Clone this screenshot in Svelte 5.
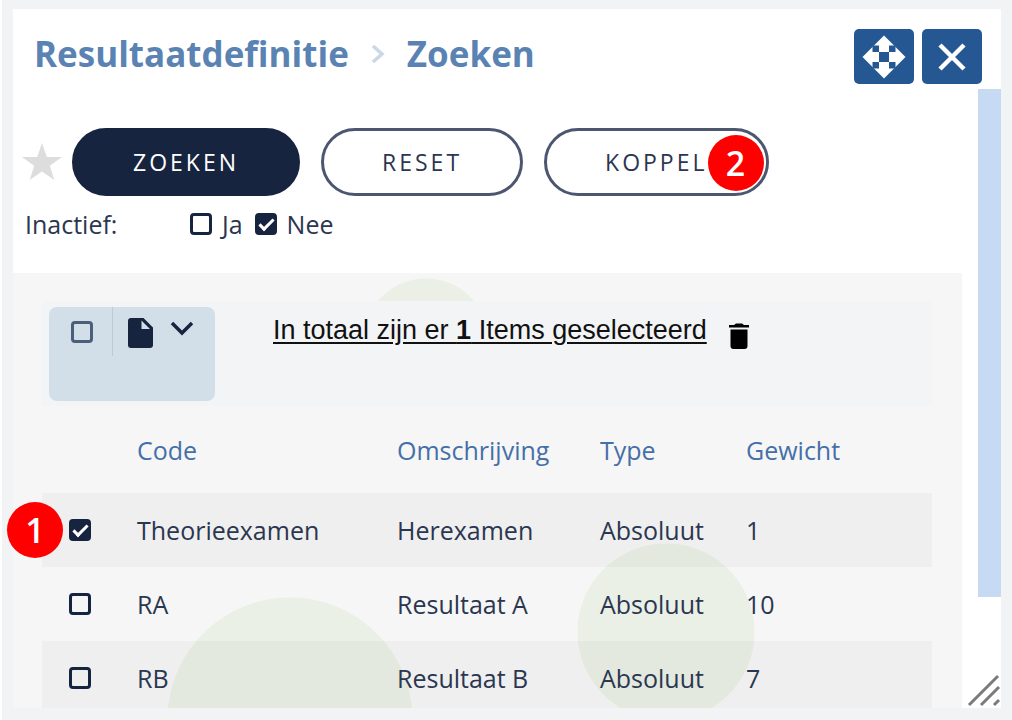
<script>
	let inactive = $state({ ja: false, nee: true });
	let selectAll = $state(false);

	let rows = $state([
		{ code: 'Theorieexamen', description: 'Herexamen', type: 'Absoluut', weight: 1, selected: true },
		{ code: 'RA', description: 'Resultaat A', type: 'Absoluut', weight: 10, selected: false },
		{ code: 'RB', description: 'Resultaat B', type: 'Absoluut', weight: 7, selected: false }
	]);

	let selectedCount = $derived(rows.filter((row) => row.selected).length);
</script>

<div class="backdrop">
	<div class="dialog" role="dialog" aria-labelledby="title">
		<header>
			<h1 id="title">
				<span>Resultaatdefinitie</span>
				<svg class="crumb" viewBox="0 0 14 20" aria-hidden="true">
					<path d="M2 2l9 8-9 8" fill="none" stroke="#c9d7e6" stroke-width="3.5" />
				</svg>
				<span>Zoeken</span>
			</h1>
			<div class="window-buttons">
				<button type="button" aria-label="Verplaatsen">
					<svg width="44" height="44" viewBox="0 0 44 44">
						<path fill="#fff" d="M22 .5L43.500 22 22 43.500.5 22z" />
						<path
							fill="#255893"
							d="M17 17h10v10H17zM10.500 10.500h6.500v6.500h-6.500zM27 10.500h6.500v6.500H27zM10.500 27h6.500v6.500h-6.500zM27 27h6.500v6.500H27z"
						/>
					</svg>
				</button>
				<button type="button" aria-label="Sluiten">
					<svg width="30" height="30" viewBox="0 0 30 30">
						<path d="M3 3l24 24M27 3L3 27" stroke="#fff" stroke-width="4.5" />
					</svg>
				</button>
			</div>
		</header>

		<div class="body">
			<main>
				<form class="search">
					<div class="actions">
						<button type="button" class="star" aria-label="Favoriet">
							<svg width="40" height="38" viewBox="0 0 40 38">
								<path
									fill="#ddd"
									d="M20 0l4.8 14H40L27.800 22.700 32.300 37 20 28.400 7.700 37l4.500-14.300L0 14h15.200z"
								/>
							</svg>
						</button>
						<button type="button" class="pill primary">ZOEKEN</button>
						<button type="button" class="pill">RESET</button>
						<div class="marked">
							<button type="button" class="pill">KOPPEL</button>
							<span class="badge badge-link">2</span>
						</div>
					</div>
					<div class="filter">
						<span class="filter-name">Inactief:</span>
						<label><input type="checkbox" bind:checked={inactive.ja} />Ja</label>
						<label><input type="checkbox" bind:checked={inactive.nee} />Nee</label>
					</div>
				</form>

				<section class="results">
					<div class="toolbar">
						<div class="tools">
							<div class="select-all">
								<input type="checkbox" aria-label="Alles selecteren" bind:checked={selectAll} />
							</div>
							<button type="button" class="export" aria-label="Exporteren">
								<svg width="25" height="30" viewBox="0 0 25 30">
									<path
										fill="#17243f"
										fill-rule="evenodd"
										d="M3 0h12.500L25 9.500V27q0 3-3 3H3q-3 0-3-3V3q0-3 3-3zM13.500 2.500V11H22z"
									/>
								</svg>
								<svg width="24" height="16" viewBox="0 0 24 16">
									<path d="M2 2l10 10L22 2" fill="none" stroke="#17243f" stroke-width="3.500" />
								</svg>
							</button>
						</div>
						<div class="selection">
							<div class="selection-line">
								<a href="#selectie">In totaal zijn er <b>{selectedCount}</b> Items geselecteerd</a>
								<button type="button" class="trash" aria-label="Selectie wissen">
									<svg width="20" height="26" viewBox="0 0 20 26">
										<path d="M0 2h5l2-1.500h6L15 2h5v2.500H0zM1.500 6.500h17V23q0 3-3 3h-11q-3 0-3-3z" />
									</svg>
								</button>
							</div>
							<p class="added">1 item toegevoegd aan de selectie</p>
						</div>
					</div>

					<table>
						<thead>
							<tr>
								<th class="col-check"></th>
								<th class="col-code">Code</th>
								<th class="col-description">Omschrijving</th>
								<th class="col-type">Type</th>
								<th>Gewicht</th>
							</tr>
						</thead>
						<tbody>
							{#each rows as row, i}
								<tr>
									<td class="check">
										<input type="checkbox" aria-label={row.code} bind:checked={row.selected} />
										{#if i === 0}
											<span class="badge badge-row">1</span>
										{/if}
									</td>
									<td>{row.code}</td>
									<td>{row.description}</td>
									<td>{row.type}</td>
									<td>{row.weight}</td>
								</tr>
							{/each}
						</tbody>
					</table>
				</section>
			</main>
			<div class="scrollbar"><div class="thumb"></div></div>
		</div>

		<svg class="grip" width="34" height="34" viewBox="0 0 34 34" aria-hidden="true">
			<path
				d="M2 31L31 2M14 31L32 13M27 31l5-5"
				fill="none"
				stroke="#7b7b7b"
				stroke-width="3"
			/>
		</svg>
	</div>
</div>

<style>
	:global(body) {
		margin: 0;
	}

	.backdrop {
		box-sizing: border-box;
		height: 100vh;
		padding: 9px 11px 12px;
		border-left: 2px solid #fff;
		background: #f2f3f5;
		color: #2b3650;
		font-family: 'Open Sans', 'Noto Sans', sans-serif;
		font-size: 25px;
		line-height: 36px;
	}

	.dialog {
		position: relative;
		display: flex;
		flex-direction: column;
		height: 100%;
		background: #fff;
	}

	button {
		padding: 0;
		border: 0;
		background: none;
		color: inherit;
		font: inherit;
		cursor: pointer;
	}

	svg {
		display: block;
	}

	header {
		display: flex;
		justify-content: space-between;
		padding: 20px 19px 5px 21px;
	}

	h1 {
		display: flex;
		align-items: center;
		gap: 22px;
		margin: 0;
		height: 50px;
		color: #5a83b3;
		font-size: 35px;
		font-weight: 700;
	}

	.crumb {
		width: 14px;
		height: 20px;
	}

	.window-buttons {
		display: flex;
		gap: 8px;
	}

	.window-buttons button {
		display: flex;
		align-items: center;
		justify-content: center;
		width: 60px;
		height: 55px;
		border-radius: 5px;
		background: #255893;
	}

	.body {
		display: flex;
		flex: 1;
		gap: 16px;
		min-height: 0;
		overflow-y: clip;
	}

	main {
		flex: 1;
		min-width: 0;
	}

	.scrollbar {
		width: 23px;
	}

	.thumb {
		height: 82%;
		background: #c7daf4;
	}

	.search {
		padding: 39px 9px 31px;
	}

	.actions {
		display: flex;
		align-items: center;
		gap: 21px;
	}

	.star {
		margin-right: -11px;
	}

	.pill {
		height: 68px;
		padding: 0 58px;
		border: 3px solid #4c566f;
		border-radius: 34px;
		background: #fff;
		color: #2b3650;
		font-size: 23px;
		letter-spacing: 3px;
	}

	.pill.primary {
		border-color: #17243f;
		background: #17243f;
		color: #fff;
	}

	.marked {
		position: relative;
	}

	.badge {
		position: absolute;
		width: 56px;
		border-radius: 50%;
		background: #f00;
		color: #fff;
		font-size: 34px;
		font-weight: 600;
		line-height: 56px;
		text-align: center;
	}

	.badge-link {
		top: 7px;
		right: 5px;
	}

	.badge-row {
		top: 9px;
		left: -35px;
	}

	.filter {
		display: flex;
		gap: 12px;
		margin-top: 10px;
		padding-left: 3px;
	}

	.filter-name {
		width: 153px;
	}

	.filter label {
		display: flex;
		align-items: center;
		gap: 10px;
	}

	input {
		display: block;
		position: relative;
		box-sizing: border-box;
		flex: none;
		width: 22px;
		height: 22px;
		margin: 0;
		border: 3px solid #17243f;
		border-radius: 4px;
		appearance: none;
	}

	input:checked {
		background: #17243f;
	}

	input:checked::after {
		content: '';
		position: absolute;
		top: 3px;
		left: 1px;
		width: 12px;
		height: 5px;
		border: solid #fff;
		border-width: 0 0 3px 3px;
		transform: rotate(-45deg);
	}

	.results {
		padding: 28px 30px 28px 29px;
		/* soft circles behind the table */
		background:
			radial-gradient(circle at 413px 68px, #eaf0e6 62px, transparent 63px),
			radial-gradient(circle at 277px 447px, #eaf0e6 122px, transparent 123px),
			radial-gradient(circle at 653px 359px, #eaf0e6 88px, transparent 89px), #f6f6f6;
	}

	.toolbar {
		display: flex;
		padding: 6px 7px 5px;
		background: #f2f4f6;
	}

	.tools {
		display: flex;
		align-items: flex-start;
		width: 166px;
		height: 94px;
		border-radius: 8px;
		background: #d2dfe8;
	}

	.select-all {
		height: 35px;
		padding: 14px 19px 0 22px;
		border-right: 1px solid #bccad4;
	}

	.select-all input {
		border-color: #4b5f78;
	}

	.export {
		display: flex;
		gap: 17px;
		padding: 11px 0 0 15px;
	}

	.export svg:last-child {
		margin-top: 3px;
	}

	.selection {
		padding-left: 5px;
	}

	.selection-line {
		display: flex;
		align-items: flex-start;
		gap: 22px;
		padding: 5px 0 0 53px;
	}

	.selection a {
		color: #111;
		font-family: 'Liberation Sans', Arial, sans-serif;
		font-size: 27px;
		text-underline-offset: 3px;
	}

	.trash {
		padding-top: 11px;
		color: #000;
	}

	.added {
		margin: 10px 0 0;
		color: #f3f5f4;
	}

	table {
		width: 100%;
		border-spacing: 0;
		table-layout: fixed;
	}

	.col-check {
		width: 95px;
	}

	.col-code {
		width: 260px;
	}

	.col-description {
		width: 203px;
	}

	.col-type {
		width: 146px;
	}

	th {
		height: 87px;
		padding: 0;
		color: #456fa8;
		font-weight: 400;
		text-align: left;
	}

	td {
		height: 74px;
		padding: 0;
	}

	tbody tr:nth-child(odd) {
		background: rgba(0, 0, 0, 0.026);
	}

	.check {
		position: relative;
		padding-left: 27px;
	}

	.grip {
		position: absolute;
		right: 0;
		bottom: 0;
	}
</style>
